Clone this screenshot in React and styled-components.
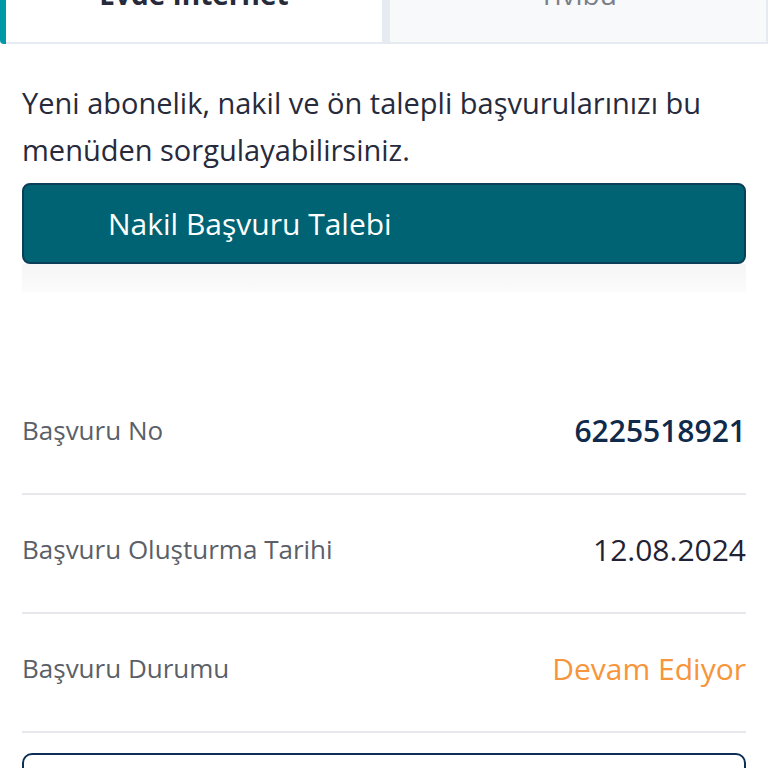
import React from 'react';
import styled, { createGlobalStyle } from 'styled-components';

const GlobalStyle = createGlobalStyle`
  html, body {
    margin: 0;
    padding: 0;
    background: #ffffff;
    font-family: 'Open Sans', 'Noto Sans', sans-serif;
  }
  * { box-sizing: border-box; }
`;

const Page = styled.div`
  width: 768px;
  height: 768px;
  overflow: hidden;
  background: #ffffff;
`;

const TabBar = styled.div`
  display: flex;
  height: 44px;
  border-left: 6px solid #0097a7;
  border-bottom-left-radius: 4px;
  background: #e6ebf1;
  gap: 8px;
  padding-right: 2px;
`;

const Tab = styled.div`
  flex: 1;
  overflow: hidden;
  display: flex;
  justify-content: center;
  background: ${(p) => (p.$active ? '#ffffff' : '#f7f9fb')};
  border-bottom: 2px solid #e6ebf1;
  span {
    margin-top: -20px;
    font-size: 28px;
    line-height: 28px;
    font-weight: ${(p) => (p.$active ? 700 : 400)};
    color: ${(p) => (p.$active ? '#262a3b' : '#7b7f88')};
  }
`;

const Content = styled.div`
  padding: 0 22px;
`;

const Intro = styled.p`
  margin: 35px 0 10px;
  font-size: 29px;
  line-height: 47px;
  color: #262a3b;
`;

const RequestButton = styled.button`
  display: flex;
  align-items: center;
  width: 100%;
  height: 81px;
  padding: 0 0 0 84px;
  background: #006373;
  border: 2px solid #0b3e58;
  border-radius: 8px;
  color: #ffffff;
  font-family: inherit;
  font-size: 30px;
  text-align: left;
`;

const ButtonShade = styled.div`
  height: 28px;
  background: linear-gradient(#f6f6f7, #fbfbfc);
`;

const Details = styled.div`
  margin-top: 84px;
`;

const Row = styled.div`
  display: flex;
  align-items: center;
  justify-content: space-between;
  height: 119px;
  padding-bottom: 9px;
  border-bottom: 2px solid #e6e8ec;
`;

const Label = styled.span`
  font-size: 26px;
  color: #5b5f68;
`;

const Value = styled.span`
  font-size: ${(p) => p.$size || 30}px;
  font-weight: ${(p) => p.$weight || 400};
  color: ${(p) => p.$color || '#1f2335'};
`;

const NextCard = styled.div`
  margin-top: 20px;
  height: 80px;
  border: 2px solid #0b2f57;
  border-radius: 10px;
`;

const rows = [
  { label: 'Başvuru No', value: '6225518921', color: '#102a4c', weight: 600, size: 30 },
  { label: 'Başvuru Oluşturma Tarihi', value: '12.08.2024', color: '#1f2335' },
  { label: 'Başvuru Durumu', value: 'Devam Ediyor', color: '#f7953c' },
];

export default function App() {
  return (
    <Page>
      <GlobalStyle />
      <TabBar>
        <Tab $active><span>Evde İnternet</span></Tab>
        <Tab><span>Tivibu</span></Tab>
      </TabBar>
      <Content>
        <Intro>
          Yeni abonelik, nakil ve ön talepli başvurularınızı bu menüden sorgulayabilirsiniz.
        </Intro>
        <RequestButton type="button">Nakil Başvuru Talebi</RequestButton>
        <ButtonShade />
        <Details>
          {rows.map((r) => (
            <Row key={r.label}>
              <Label>{r.label}</Label>
              <Value $color={r.color} $weight={r.weight} $size={r.size}>{r.value}</Value>
            </Row>
          ))}
        </Details>
        <NextCard />
      </Content>
    </Page>
  );
}
